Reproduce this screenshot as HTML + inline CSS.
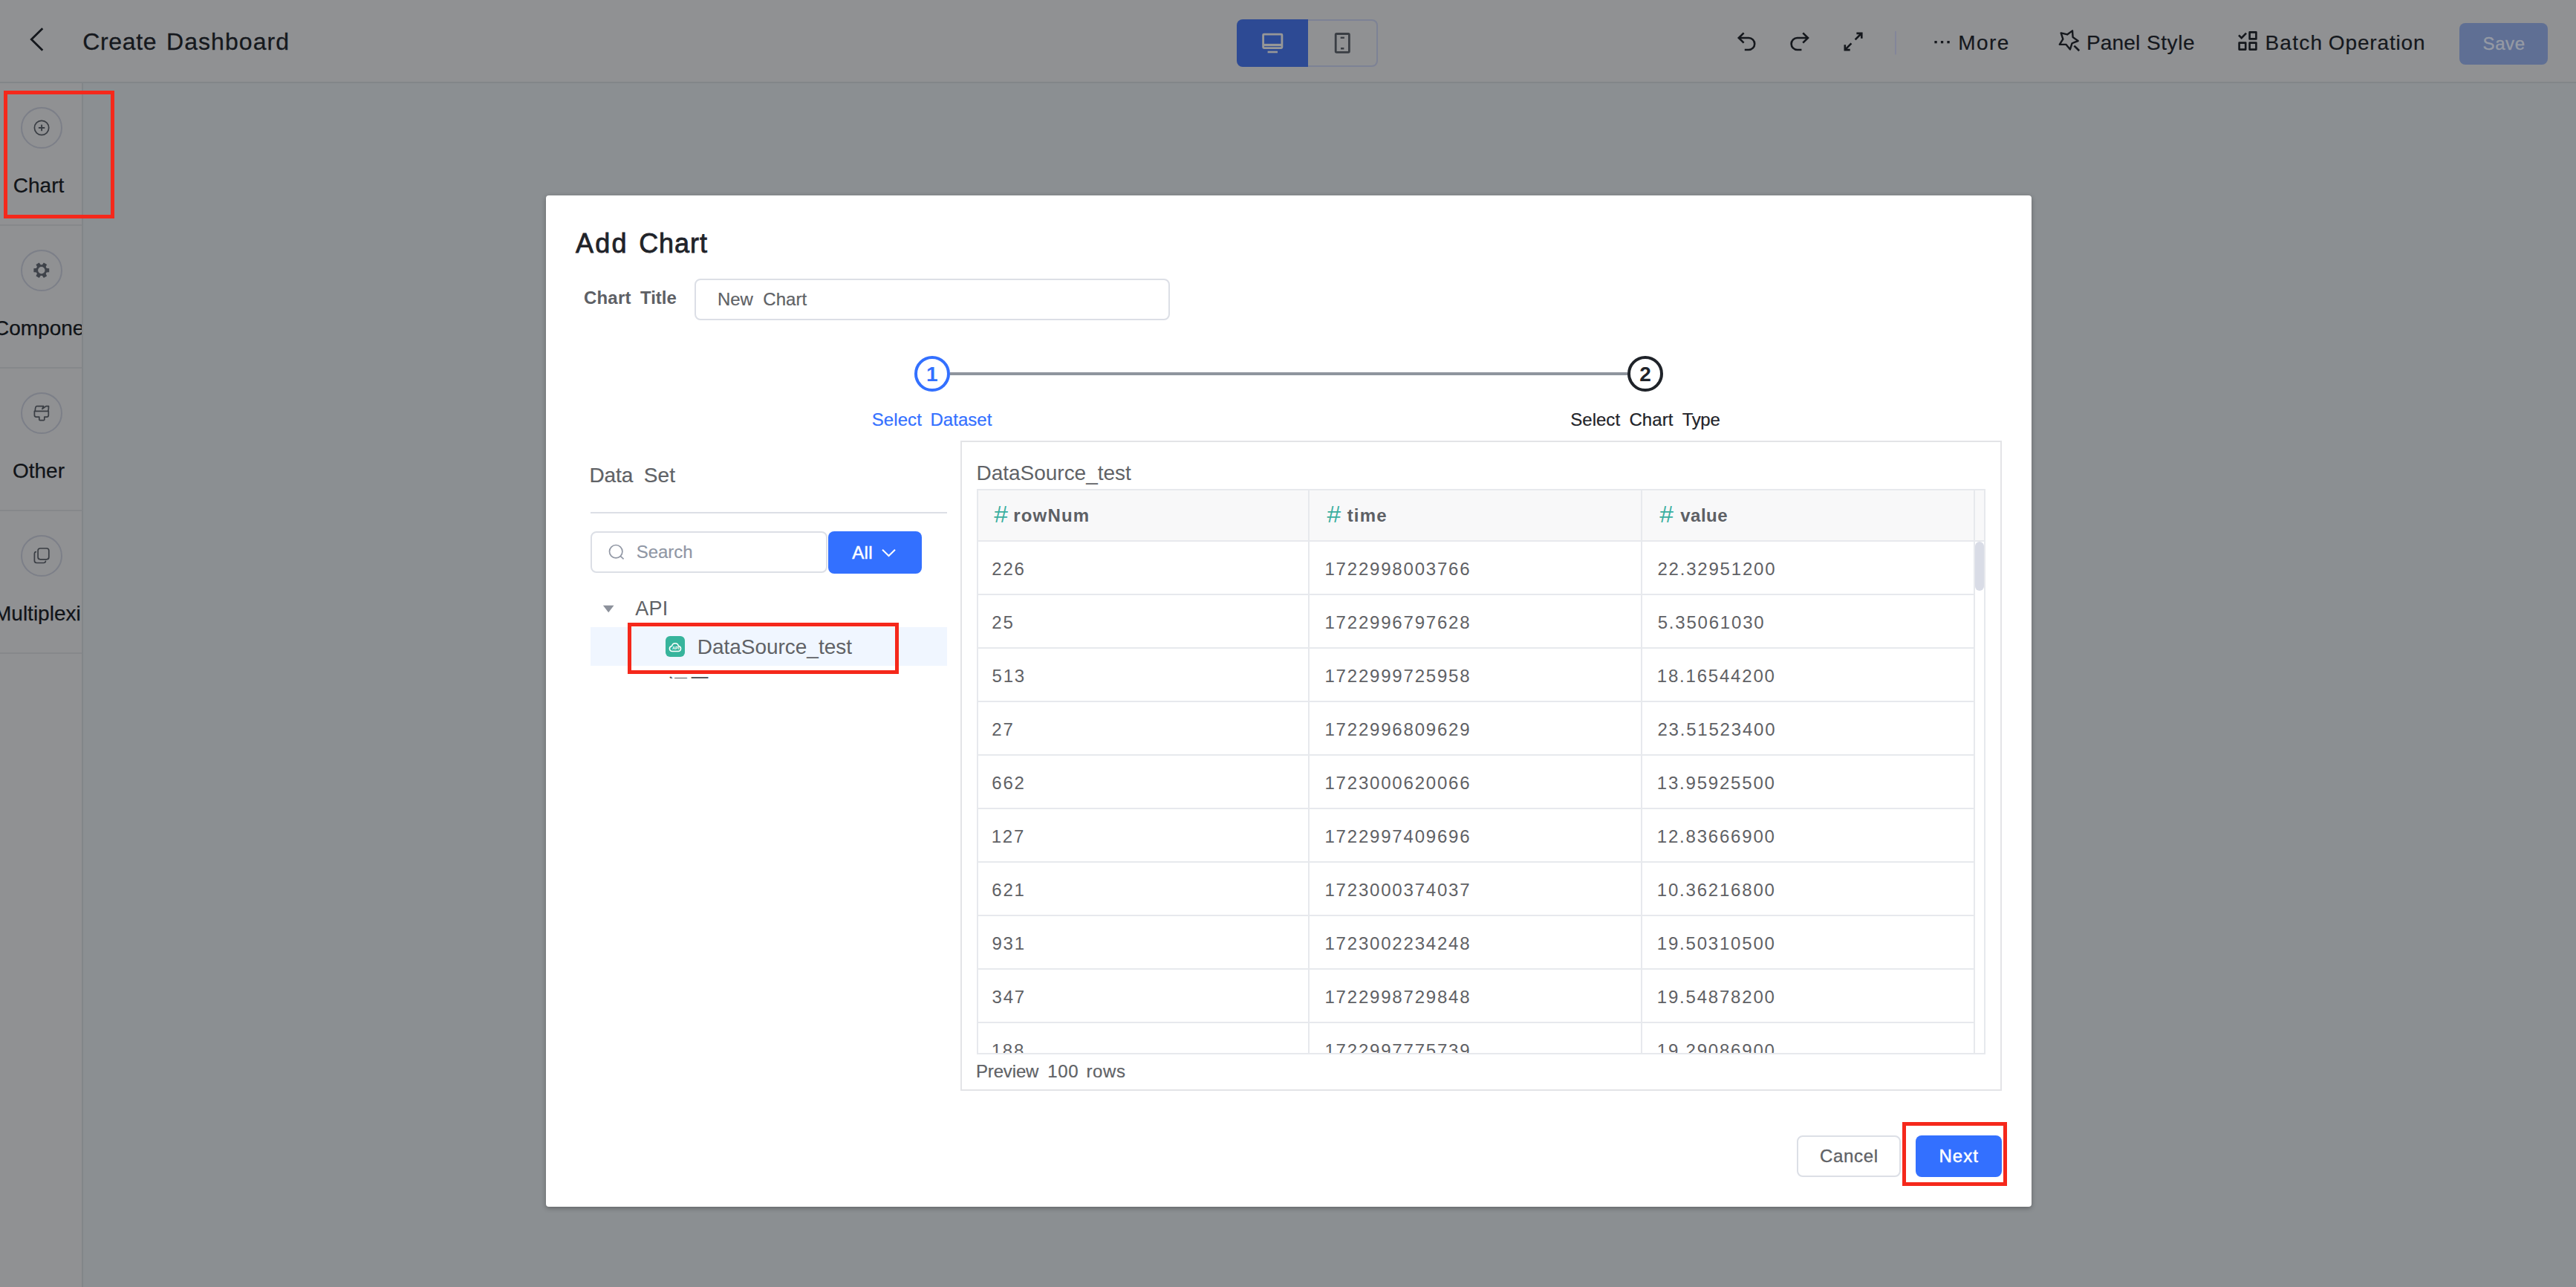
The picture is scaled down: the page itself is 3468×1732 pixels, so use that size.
<!DOCTYPE html>
<html lang="en"><head><meta charset="utf-8"><title>Create Dashboard</title><style>
html,body{margin:0;padding:0;}
body{width:3468px;height:1732px;overflow:hidden;position:relative;background:#8b8f92;font-family:"Liberation Sans","Noto Sans CJK SC",sans-serif;}
.a{position:absolute;box-sizing:content-box;}
.t{position:absolute;left:0;white-space:pre;}
.t span{position:absolute;top:0;}
.lab{font-size:28px;line-height:28px;color:#111418;-webkit-text-stroke:0.25px #111418;text-align:center;white-space:nowrap;overflow:hidden;}
svg{overflow:visible;}
</style></head><body>
<div class="a" style="left:0px;top:0px;width:3468px;height:1732px;background:#8b8f92;"></div>
<div class="a" style="left:0px;top:0px;width:3468px;height:110px;background:#909193;border-bottom:2px solid #828689;"></div>
<div class="a" id="side" style="left:0;top:112px;width:110px;height:1620px;background:#909193;border-right:2px solid #828689;overflow:visible;">
<div class="a" style="left:0;top:0;width:110px;height:1620px;overflow:hidden;">
<div class="a" style="left:0;top:190px;width:110px;height:2px;background:#86888b;"></div>
<div class="a" style="left:28px;top:32px;width:52px;height:52px;border:2px solid #7c7f88;border-radius:50%;"></div>
<div class="a lab" style="left:-8px;top:124px;width:120px;">Chart</div>
<div class="a" style="left:0;top:382px;width:110px;height:2px;background:#86888b;"></div>
<div class="a" style="left:28px;top:224px;width:52px;height:52px;border:2px solid #7c7f88;border-radius:50%;"></div>
<div class="a lab" style="left:-8px;top:316px;width:120px;">Component</div>
<div class="a" style="left:0;top:574px;width:110px;height:2px;background:#86888b;"></div>
<div class="a" style="left:28px;top:416px;width:52px;height:52px;border:2px solid #7c7f88;border-radius:50%;"></div>
<div class="a lab" style="left:-8px;top:508px;width:120px;">Other</div>
<div class="a" style="left:0;top:766px;width:110px;height:2px;background:#86888b;"></div>
<div class="a" style="left:28px;top:608px;width:52px;height:52px;border:2px solid #7c7f88;border-radius:50%;"></div>
<div class="a lab" style="left:-8px;top:700px;width:120px;">Multiplexing</div>
</div></div>
<svg class="a" style="left:0;top:112px" width="112" height="800" viewBox="0 112 112 800" fill="none" stroke="#3a3e44" stroke-width="1.7">
<circle cx="56.05" cy="172" r="9.65"/><path d="M51.9 172H60.3M56.1 167.7V176.3" stroke-width="1.9"/>
<path d="M56.90 356.28 L58.89 353.46 L63.12 355.90 L61.68 359.04 L62.77 360.94 L66.22 361.26 L66.22 366.14 L62.77 366.46 L61.68 368.36 L63.12 371.50 L58.89 373.94 L56.90 371.12 L54.70 371.12 L52.71 373.94 L48.48 371.50 L49.92 368.36 L48.83 366.46 L45.38 366.14 L45.38 361.26 L48.83 360.94 L49.92 359.04 L48.48 355.90 L52.71 353.46 L54.70 356.28Z M51.10 363.70 a4.7 4.7 0 1 0 9.4 0 a4.7 4.7 0 1 0 -9.4 0Z" fill="#3f434a" stroke="none" fill-rule="evenodd"/>
<path d="M47.3 553.2Q47.4 546.6 49.6 546.6H58.6L56.9 550.3L62 546.6H65.5Q65.6 550 64.8 553.2" stroke-linejoin="round"/>
<path d="M46.4 553.3H65.3V558.8Q65.3 561.1 63 561.1H59.8V564.5Q59.8 565.7 58.6 565.7H54Q52.8 565.7 52.8 564.5V561.1H48.7Q46.4 561.1 46.4 558.8Z" stroke-linejoin="round"/>
<rect x="51.1" y="738" width="14.7" height="14.8" rx="3"/>
<path d="M48.2 742.6Q46.4 743 46.4 745V754.6Q46.4 757.5 49.3 757.5H58.8Q61 757.5 61.4 755.4"  stroke-linecap="round"/>
</svg>
<svg class="a" style="left:30px;top:30px" width="40" height="50" viewBox="30 30 40 50" fill="none" stroke="#15181d" stroke-width="2.8"><path d="M57.3 38.3L42.3 53L57.3 67.7"/></svg>
<div class="t " style="top:40px;font-size:32px;line-height:32px;color:#15181d;-webkit-text-stroke:0.3px #15181d;"><span style="left:111.17px;letter-spacing:0.68px;">Create </span><span style="left:223.97px;letter-spacing:1.07px;">Dashboard</span></div>
<div class="a" style="left:1665px;top:26px;width:96px;height:64px;background:#2d4a94;border-radius:8px 0 0 8px;"></div>
<div class="a" style="left:1761px;top:26px;width:92px;height:60px;border:2px solid #7d8295;border-left:none;border-radius:0 8px 8px 0;"></div>
<svg class="a" style="left:1665px;top:26px" width="190" height="64" viewBox="1665 26 190 64" fill="none">
<rect x="1700.6" y="46.1" width="25.3" height="18.5" rx="1" stroke="#979797" stroke-width="2.8"/>
<rect x="1701" y="58.9" width="25" height="3.2" fill="#979797"/>
<rect x="1706.6" y="68.7" width="13.4" height="2.6" fill="#979797"/>
<rect x="1798.2" y="45.5" width="18.2" height="24.8" rx="1.2" stroke="#3a3e44" stroke-width="2.8"/>
<rect x="1804.7" y="49.6" width="5.2" height="2.3" fill="#3a3e44"/><rect x="1805" y="64" width="4.4" height="2.5" fill="#3a3e44"/>
</svg>
<svg class="a" style="left:2320px;top:30px" width="740" height="50" viewBox="2320 30 740 50" fill="none" stroke="#15181d" stroke-width="2.6">
<path d="M2347.6 44.4L2340.8 51L2347.6 57.6M2341 51H2354.2A8 8 0 0 1 2354.2 67H2348.8"/>
<path d="M2427.2 44.4L2434 51L2427.2 57.6M2433.8 51H2419.6A8 8 0 0 0 2419.6 67H2425.4"/>
<path d="M2497.6 53.4L2506 45M2499.4 44.9H2506.3V51.8M2492.4 58.4L2484 66.8M2483.8 60.2V67.1H2490.7"/>
<path d="M2552 42V73.5" stroke="#83869a" stroke-width="2"/>
<g fill="#15181d" stroke="none"><rect x="2604.4" y="55" width="3.3" height="3.3"/><rect x="2612.9" y="55" width="3.3" height="3.3"/><rect x="2621.4" y="55" width="3.3" height="3.3"/></g>
<path d="M2790.02 41.35 L2790.61 49.96 L2797.60 55.02 L2789.59 58.24 L2786.94 66.46 L2781.40 59.83 L2772.77 59.85 L2777.35 52.53 L2774.67 44.33 L2783.05 46.43Z" stroke-linejoin="round" stroke-width="2.4"/>
<path d="M2792.4 61.6L2799.2 68.2"/>
<g stroke-linejoin="round"><rect x="3028.6" y="43.4" width="8.8" height="9"/><rect x="3014.6" y="57.6" width="8.6" height="9"/><rect x="3028.6" y="57.6" width="8.8" height="9"/></g>
<path d="M3014 47.3L3017.7 51.2L3024 44.6"/>
</svg>
<div class="t " style="top:44px;font-size:28px;line-height:28px;color:#15181d;-webkit-text-stroke:0.2px #15181d;"><span style="left:2636.20px;letter-spacing:1.42px;">More</span></div>
<div class="t " style="top:44px;font-size:28px;line-height:28px;color:#15181d;-webkit-text-stroke:0.2px #15181d;"><span style="left:2809.00px;letter-spacing:0.16px;">Panel </span><span style="left:2890.03px;letter-spacing:0.57px;">Style</span></div>
<div class="t " style="top:44px;font-size:28px;line-height:28px;color:#15181d;-webkit-text-stroke:0.2px #15181d;"><span style="left:3049.40px;letter-spacing:1.28px;">Batch </span><span style="left:3134.87px;letter-spacing:0.84px;">Operation</span></div>
<div class="a" style="left:3311px;top:31px;width:119px;height:56px;background:#5f6f94;border-radius:8px;"></div>
<div class="t " style="top:47px;font-size:24px;line-height:24px;color:#959aa4;-webkit-text-stroke:0.4px #959aa4;"><span style="left:3342.51px;letter-spacing:0.62px;">Save</span></div>
<div class="a" style="left:5px;top:122px;width:139px;height:162px;border:5px solid #f5281b;"></div>
<div class="a" style="left:735px;top:263px;width:2000px;height:1361px;background:#fff;border-radius:4px;box-shadow:0 2px 6px rgba(0,0,0,.3);"></div>
<div class="t " style="top:310px;font-size:36px;line-height:36px;color:#1f2329;-webkit-text-stroke:0.8px #1f2329;"><span style="left:774.93px;letter-spacing:2.22px;">Add </span><span style="left:860.17px;letter-spacing:0.94px;">Chart</span></div>
<div class="t " style="top:389px;font-size:24px;line-height:24px;color:#5d6065;font-weight:bold;"><span style="left:786.02px;letter-spacing:0.18px;">Chart </span><span style="left:861.93px;letter-spacing:0.02px;">Title</span></div>
<div class="a" style="left:935px;top:375px;width:636px;height:52px;border:2px solid #dcdfe6;border-radius:8px;"></div>
<div class="t " style="top:391px;font-size:24px;line-height:24px;color:#606266;-webkit-text-stroke:0.2px #606266;"><span style="left:965.93px;">New </span><span style="left:1027.28px;letter-spacing:0.05px;">Chart</span></div>
<div class="a" style="left:1279px;top:501px;width:912px;height:4px;background:#8f959e;"></div>
<div class="a" style="left:1231px;top:479px;width:40px;height:40px;border:4px solid #3370ff;border-radius:50%;background:#fff;"></div>
<div class="a" style="left:2191px;top:479px;width:40px;height:40px;border:4px solid #1f2329;border-radius:50%;background:#fff;"></div>
<div class="t " style="top:490px;font-size:28px;line-height:28px;color:#3370ff;font-weight:bold;"><span style="left:1247.04px;">1</span></div>
<div class="t " style="top:490px;font-size:28px;line-height:28px;color:#1f2329;font-weight:bold;"><span style="left:2207.23px;">2</span></div>
<div class="t " style="top:553px;font-size:24px;line-height:24px;color:#3370ff;-webkit-text-stroke:0.2px #3370ff;"><span style="left:1173.71px;letter-spacing:0.09px;">Select </span><span style="left:1252.43px;letter-spacing:0.04px;">Dataset</span></div>
<div class="t " style="top:553px;font-size:24px;line-height:24px;color:#1f2329;-webkit-text-stroke:0.2px #1f2329;"><span style="left:2114.31px;letter-spacing:0.01px;">Select </span><span style="left:2193.38px;letter-spacing:0.08px;">Chart </span><span style="left:2264.66px;letter-spacing:-0.31px;">Type</span></div>
<div class="t " style="top:626px;font-size:28px;line-height:28px;color:#606266;-webkit-text-stroke:0.2px #606266;"><span style="left:793.50px;letter-spacing:-0.11px;">Data </span><span style="left:866.63px;letter-spacing:0.23px;">Set</span></div>
<div class="a" style="left:795px;top:688.5px;width:480px;height:2px;background:#dcdfe6;"></div>
<div class="a" style="left:795px;top:715px;width:315px;height:52px;border:2px solid #dcdfe6;border-radius:8px;"></div>
<svg class="a" style="left:815px;top:728px" width="30" height="30" viewBox="815 728 30 30" fill="none" stroke="#9298a5" stroke-width="1.7"><circle cx="829.2" cy="742.2" r="8.7"/><path d="M835.2 748.4L839.6 752.4"/></svg>
<div class="t " style="top:731px;font-size:24px;line-height:24px;color:#8f96a4;-webkit-text-stroke:0.15px #8f96a4;"><span style="left:856.71px;letter-spacing:-0.04px;">Search</span></div>
<div class="a" style="left:1115px;top:715px;width:126px;height:57px;background:#3370ff;border-radius:8px;"></div>
<div class="t " style="top:732px;font-size:24px;line-height:24px;color:#fff;-webkit-text-stroke:0.5px #fff;"><span style="left:1147.25px;letter-spacing:0.34px;">All</span></div>
<svg class="a" style="left:1183px;top:734px" width="28" height="20" viewBox="1183 734 28 20" fill="none" stroke="#fff" stroke-width="2"><path d="M1188 739.8L1196.5 748L1205 739.8"/></svg>
<svg class="a" style="left:808px;top:810px" width="24" height="20" viewBox="808 810 24 20"><path d="M811.9 814.8H826.5L819.2 824.3Z" fill="#8c919b"/></svg>
<div class="t " style="top:806px;font-size:27px;line-height:27px;color:#606266;"><span style="left:855.15px;letter-spacing:0.31px;">API</span></div>
<div class="a" style="left:795px;top:844px;width:480px;height:52px;background:#f0f6ff;"></div>
<div class="a" style="left:896px;top:856px;width:26px;height:28px;background:#37b49c;border-radius:6px;"></div>
<svg class="a" style="left:896px;top:856px" width="26" height="28" viewBox="0 0 26 28" fill="none" stroke="#fff" stroke-width="1.5"><path d="M8.8 20.6H17.2A3.6 3.6 0 0 0 18.4 13.7Q17.8 13.3 17.3 13.2A4.4 4.4 0 0 0 8.7 13.2Q8.2 13.3 7.6 13.7A3.6 3.6 0 0 0 8.8 20.6Z"/></svg>
<div class="t " style="top:870px;font-size:5.5px;line-height:5.5px;color:#fff;font-weight:bold;"><span style="left:905.06px;">API</span></div>
<div class="t " style="top:857px;font-size:28px;line-height:28px;color:#606266;"><span style="left:938.70px;letter-spacing:-0.02px;">DataSource_test</span></div>
<div class="a" style="left:890px;top:907px;width:200px;height:6px;overflow:hidden;"><div class="t" style="left:9px;top:2px;font-size:28px;line-height:32px;color:#55585e;">还原</div></div>
<div class="a" style="left:845px;top:838px;width:355px;height:59px;border:5px solid #f5281b;"></div>
<div class="a" style="left:1293px;top:593px;width:1398px;height:871px;border:2px solid #e3e4e7;"></div>
<div class="t " style="top:623px;font-size:28px;line-height:28px;color:#606266;"><span style="left:1314.50px;letter-spacing:-0.02px;">DataSource_test</span></div>
<div class="a" style="left:1315px;top:658px;width:1354px;height:757px;border:2px solid #e7e9ed;overflow:hidden;"></div>
<div class="a" style="left:1317px;top:660px;width:1354px;height:67px;background:#f8f8f9;"></div>
<div class="a" style="left:1317px;top:727px;width:1354px;height:2px;background:#e7e9ed;"></div>
<div class="a" style="left:1761px;top:660px;width:2px;height:757px;background:#e7e9ed;"></div>
<div class="a" style="left:2209px;top:660px;width:2px;height:757px;background:#e7e9ed;"></div>
<div class="a" style="left:2657px;top:660px;width:2px;height:757px;background:#e7e9ed;"></div>
<div class="a" style="left:1317px;top:729px;width:1354px;height:688px;overflow:hidden;">
<div class="a" style="left:0px;top:70px;width:1342px;height:2px;background:#e7e9ed;"></div>
<div class="t " style="top:25px;font-size:24px;line-height:24px;color:#5f6165;"><span style="left:18.29px;letter-spacing:1.80px;">226</span></div>
<div class="t " style="top:25px;font-size:24px;line-height:24px;color:#5f6165;"><span style="left:466.47px;letter-spacing:1.80px;">1722998003766</span></div>
<div class="t " style="top:25px;font-size:24px;line-height:24px;color:#5f6165;"><span style="left:914.39px;letter-spacing:1.80px;">22.32951200</span></div>
<div class="a" style="left:0px;top:142px;width:1342px;height:2px;background:#e7e9ed;"></div>
<div class="t " style="top:97px;font-size:24px;line-height:24px;color:#5f6165;"><span style="left:18.29px;letter-spacing:1.80px;">25</span></div>
<div class="t " style="top:97px;font-size:24px;line-height:24px;color:#5f6165;"><span style="left:466.47px;letter-spacing:1.80px;">1722996797628</span></div>
<div class="t " style="top:97px;font-size:24px;line-height:24px;color:#5f6165;"><span style="left:914.64px;letter-spacing:1.80px;">5.35061030</span></div>
<div class="a" style="left:0px;top:214px;width:1342px;height:2px;background:#e7e9ed;"></div>
<div class="t " style="top:169px;font-size:24px;line-height:24px;color:#5f6165;"><span style="left:18.54px;letter-spacing:1.80px;">513</span></div>
<div class="t " style="top:169px;font-size:24px;line-height:24px;color:#5f6165;"><span style="left:466.47px;letter-spacing:1.80px;">1722999725958</span></div>
<div class="t " style="top:169px;font-size:24px;line-height:24px;color:#5f6165;"><span style="left:913.77px;letter-spacing:1.80px;">18.16544200</span></div>
<div class="a" style="left:0px;top:286px;width:1342px;height:2px;background:#e7e9ed;"></div>
<div class="t " style="top:241px;font-size:24px;line-height:24px;color:#5f6165;"><span style="left:18.29px;letter-spacing:1.80px;">27</span></div>
<div class="t " style="top:241px;font-size:24px;line-height:24px;color:#5f6165;"><span style="left:466.47px;letter-spacing:1.80px;">1722996809629</span></div>
<div class="t " style="top:241px;font-size:24px;line-height:24px;color:#5f6165;"><span style="left:914.39px;letter-spacing:1.80px;">23.51523400</span></div>
<div class="a" style="left:0px;top:358px;width:1342px;height:2px;background:#e7e9ed;"></div>
<div class="t " style="top:313px;font-size:24px;line-height:24px;color:#5f6165;"><span style="left:18.28px;letter-spacing:1.80px;">662</span></div>
<div class="t " style="top:313px;font-size:24px;line-height:24px;color:#5f6165;"><span style="left:466.47px;letter-spacing:1.80px;">1723000620066</span></div>
<div class="t " style="top:313px;font-size:24px;line-height:24px;color:#5f6165;"><span style="left:913.77px;letter-spacing:1.80px;">13.95925500</span></div>
<div class="a" style="left:0px;top:430px;width:1342px;height:2px;background:#e7e9ed;"></div>
<div class="t " style="top:385px;font-size:24px;line-height:24px;color:#5f6165;"><span style="left:17.67px;letter-spacing:1.80px;">127</span></div>
<div class="t " style="top:385px;font-size:24px;line-height:24px;color:#5f6165;"><span style="left:466.47px;letter-spacing:1.80px;">1722997409696</span></div>
<div class="t " style="top:385px;font-size:24px;line-height:24px;color:#5f6165;"><span style="left:913.77px;letter-spacing:1.80px;">12.83666900</span></div>
<div class="a" style="left:0px;top:502px;width:1342px;height:2px;background:#e7e9ed;"></div>
<div class="t " style="top:457px;font-size:24px;line-height:24px;color:#5f6165;"><span style="left:18.28px;letter-spacing:1.80px;">621</span></div>
<div class="t " style="top:457px;font-size:24px;line-height:24px;color:#5f6165;"><span style="left:466.47px;letter-spacing:1.80px;">1723000374037</span></div>
<div class="t " style="top:457px;font-size:24px;line-height:24px;color:#5f6165;"><span style="left:913.77px;letter-spacing:1.80px;">10.36216800</span></div>
<div class="a" style="left:0px;top:574px;width:1342px;height:2px;background:#e7e9ed;"></div>
<div class="t " style="top:529px;font-size:24px;line-height:24px;color:#5f6165;"><span style="left:18.38px;letter-spacing:1.80px;">931</span></div>
<div class="t " style="top:529px;font-size:24px;line-height:24px;color:#5f6165;"><span style="left:466.47px;letter-spacing:1.80px;">1723002234248</span></div>
<div class="t " style="top:529px;font-size:24px;line-height:24px;color:#5f6165;"><span style="left:913.77px;letter-spacing:1.80px;">19.50310500</span></div>
<div class="a" style="left:0px;top:646px;width:1342px;height:2px;background:#e7e9ed;"></div>
<div class="t " style="top:601px;font-size:24px;line-height:24px;color:#5f6165;"><span style="left:18.59px;letter-spacing:1.80px;">347</span></div>
<div class="t " style="top:601px;font-size:24px;line-height:24px;color:#5f6165;"><span style="left:466.47px;letter-spacing:1.80px;">1722998729848</span></div>
<div class="t " style="top:601px;font-size:24px;line-height:24px;color:#5f6165;"><span style="left:913.77px;letter-spacing:1.80px;">19.54878200</span></div>
<div class="t " style="top:673px;font-size:24px;line-height:24px;color:#5f6165;"><span style="left:17.67px;letter-spacing:1.80px;">188</span></div>
<div class="t " style="top:673px;font-size:24px;line-height:24px;color:#5f6165;"><span style="left:466.47px;letter-spacing:1.80px;">1722997775739</span></div>
<div class="t " style="top:673px;font-size:24px;line-height:24px;color:#5f6165;"><span style="left:913.77px;letter-spacing:1.80px;">19.29086900</span></div>
</div>
<div class="t " style="top:680px;font-size:28px;line-height:28px;color:#3bafa0;transform-origin:1338.5px 23px;transform:scale(1.2,1.13);"><span style="left:1338.38px;">#</span></div>
<div class="t " style="top:682px;font-size:24px;line-height:24px;color:#5d6065;font-weight:bold;"><span style="left:1364.22px;letter-spacing:1.19px;">rowNum</span></div>
<div class="t " style="top:680px;font-size:28px;line-height:28px;color:#3bafa0;transform-origin:1786.7px 23px;transform:scale(1.2,1.13);"><span style="left:1786.58px;">#</span></div>
<div class="t " style="top:682px;font-size:24px;line-height:24px;color:#5d6065;font-weight:bold;"><span style="left:1813.71px;letter-spacing:1.16px;">time</span></div>
<div class="t " style="top:680px;font-size:28px;line-height:28px;color:#3bafa0;transform-origin:2234.4px 23px;transform:scale(1.2,1.13);"><span style="left:2234.28px;">#</span></div>
<div class="t " style="top:682px;font-size:24px;line-height:24px;color:#5d6065;font-weight:bold;"><span style="left:2262.31px;letter-spacing:0.46px;">value</span></div>
<div class="a" style="left:2659px;top:729px;width:12px;height:65.5px;background:#d9dce6;border-radius:6px;"></div>
<div class="t " style="top:1430px;font-size:24px;line-height:24px;color:#606266;-webkit-text-stroke:0.2px #606266;"><span style="left:1313.93px;letter-spacing:-0.14px;">Preview </span><span style="left:1410.37px;letter-spacing:0.56px;">100 </span><span style="left:1462.51px;letter-spacing:0.63px;">rows</span></div>
<div class="a" style="left:2419px;top:1528px;width:136px;height:52px;border:2px solid #dcdfe6;border-radius:8px;"></div>
<div class="t " style="top:1544px;font-size:24px;line-height:24px;color:#606266;-webkit-text-stroke:0.35px #606266;"><span style="left:2450.08px;letter-spacing:0.64px;">Cancel</span></div>
<div class="a" style="left:2579px;top:1528px;width:116px;height:56px;background:#3370ff;border-radius:8px;"></div>
<div class="t " style="top:1544px;font-size:24px;line-height:24px;color:#fff;-webkit-text-stroke:0.5px #fff;"><span style="left:2610.53px;letter-spacing:1.00px;">Next</span></div>
<div class="a" style="left:2561px;top:1510px;width:131px;height:76px;border:5px solid #f5281b;"></div>
</body></html>
